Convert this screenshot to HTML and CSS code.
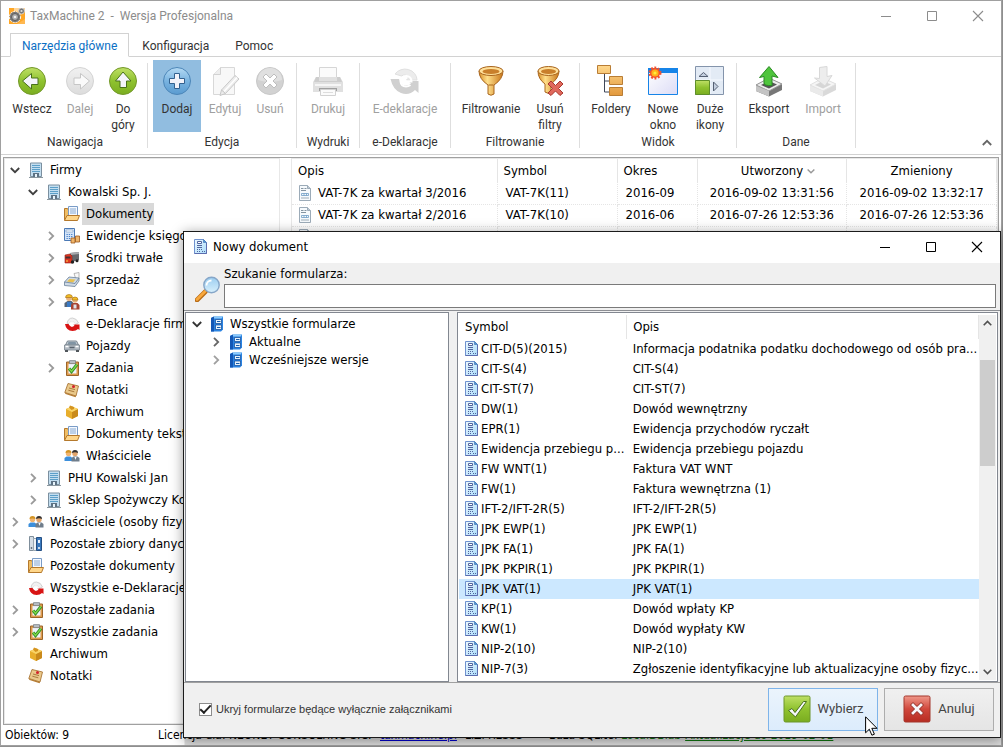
FILE: index.html
```html
<!DOCTYPE html>
<html lang="pl">
<head>
<meta charset="utf-8">
<title>TaxMachine 2 - Wersja Profesjonalna</title>
<link rel="stylesheet" href="styles.css">
</head>
<body>
<svg class="defs" aria-hidden="true">
  <defs>
    <linearGradient id="gGreen" x1="0" y1="0" x2="0" y2="1"><stop offset="0" stop-color="#bfe066"/><stop offset=".5" stop-color="#8fc22f"/><stop offset="1" stop-color="#7aad20"/></linearGradient>
    <linearGradient id="gBlue" x1="0" y1="0" x2="0" y2="1"><stop offset="0" stop-color="#b5daf4"/><stop offset=".5" stop-color="#79b3e0"/><stop offset="1" stop-color="#5a9bd0"/></linearGradient>
    <linearGradient id="gGray" x1="0" y1="0" x2="0" y2="1"><stop offset="0" stop-color="#f1f1f1"/><stop offset="1" stop-color="#dcdcdc"/></linearGradient>
    <linearGradient id="gGold" x1="0" y1="0" x2="1" y2="0"><stop offset="0" stop-color="#d88f2a"/><stop offset=".35" stop-color="#ffdf8a"/><stop offset="1" stop-color="#c8761a"/></linearGradient>
    <linearGradient id="gBox" x1="0" y1="0" x2="0" y2="1"><stop offset="0" stop-color="#ffd88d"/><stop offset="1" stop-color="#e2983b"/></linearGradient>
    <linearGradient id="gRed" x1="0" y1="0" x2="0" y2="1"><stop offset="0" stop-color="#f0988a"/><stop offset=".5" stop-color="#d0473c"/><stop offset="1" stop-color="#b72c22"/></linearGradient>
    <linearGradient id="gWin" x1="0" y1="0" x2="1" y2="1"><stop offset="0" stop-color="#ffffff"/><stop offset="1" stop-color="#dcdcf6"/></linearGradient>
    <linearGradient id="gLamp" x1="0" y1="0" x2="0" y2="1"><stop offset="0" stop-color="#9bcdf0"/><stop offset="1" stop-color="#d8f0fc"/></linearGradient>
    <linearGradient id="gPaper" x1="0" y1="0" x2="1" y2="1"><stop offset="0" stop-color="#eef8ff"/><stop offset="1" stop-color="#a9dcfa"/></linearGradient>
  </defs>
  <symbol id="chev" viewBox="0 0 10 10"><path d="M3 .8 7.2 5 3 9.2" fill="none" stroke="currentColor" stroke-width="1.8"/></symbol>
  <symbol id="chevDown" viewBox="0 0 10 10"><path d="M.8 3 5 7.2 9.2 3" fill="none" stroke="currentColor" stroke-width="1.8"/></symbol>
  <symbol id="min" viewBox="0 0 12 12"><path d="M1 6.500H11" stroke="currentColor" fill="none"/></symbol>
  <symbol id="max" viewBox="0 0 12 12"><path d="M1.500 1.500h9v9h-9z" stroke="currentColor" fill="none"/></symbol>
  <symbol id="close" viewBox="0 0 12 12"><path d="M1 1 11 11M11 1 1 11" stroke="currentColor" fill="none" stroke-width="1.100"/></symbol>

  <symbol id="app" viewBox="0 0 16 16"><path d="M0 0h16v16H0z" fill="#ffa726"/><path d="M5 0h11v3L5 3z" fill="#fff8"/><path d="M8 16l8-5v5z" fill="#fff3"/><circle cx="6" cy="9" r="5.600" fill="#777" stroke="#fff" stroke-width="1" stroke-dasharray="2 1"/><circle cx="6" cy="9" r="3.500" fill="#aaa" stroke="#5d5d5d"/><circle cx="6" cy="9" r="1.300" fill="#eee"/><circle cx="12.500" cy="3" r="3" fill="#777" stroke="#ddd" stroke-width=".8"/><circle cx="12.500" cy="3" r="1.100" fill="#ddd"/></symbol>

  <symbol id="back" viewBox="0 0 32 32"><circle cx="16" cy="16" r="13.500" fill="url(#gGreen)" stroke="#73982a"/><path d="M6.500 16 15.500 8.500v4.500H22v6.500h-6.500V24z" fill="#f4f4fa" stroke="#48711a"/></symbol>
  <symbol id="fwd" viewBox="0 0 32 32"><circle cx="16" cy="16" r="13.500" fill="url(#gGray)" stroke="#d4d4d4"/><path d="M25.500 16 16.500 8.500v4.500H10v6.500h6.500V24z" fill="#fafafa" stroke="#c6c6c6"/></symbol>
  <symbol id="up" viewBox="0 0 32 32"><circle cx="16" cy="16" r="13.500" fill="url(#gGreen)" stroke="#73982a"/><path d="M16 7 8.500 16H13v6.500h6.500V16H24z" fill="#f4f4fa" stroke="#48711a"/></symbol>
  <symbol id="add" viewBox="0 0 32 32"><circle cx="16" cy="16" r="13.500" fill="url(#gBlue)" stroke="#4c86b8"/><path d="M13.500 8.500h5v5h5v5h-5v5h-5v-5h-5v-5h5z" fill="#f2f3fa" stroke="#33618f"/></symbol>
  <symbol id="edit" viewBox="0 0 32 32"><path d="M4.500 9.500 11.500 2.500h14v27h-21z" fill="#f8f8f8" stroke="#d8d8d8"/><path d="M4.500 9.500h7v-7" fill="#eee" stroke="#d2d2d2"/><path d="M12.500 25 26 10.500l4 3.500L16.500 28.500l-5.500 2z" fill="#ececec" stroke="#c8c8c8"/><path d="M15 26.500 28 12.500" stroke="#fff" stroke-width="1.500"/><path d="M12.500 25l4 3.500" stroke="#c4c4c4"/></symbol>
  <symbol id="del" viewBox="0 0 32 32"><circle cx="16" cy="16" r="13.500" fill="#d2d2d2" stroke="#c8c8c8"/><path d="M4 15a12 12 0 0 1 24 0q-12 4-24 0z" fill="#e0e0e0"/><path d="M12 9 16 13 20 9 23 12 19 16 23 20 20 23 16 19 12 23 9 20 13 16 9 12z" fill="#fff" stroke="#bebebe"/></symbol>
  <symbol id="print" viewBox="0 0 32 32"><path d="M7.500 2.500h17v13h-17z" fill="#fbfbfb" stroke="#d6d6d6"/><path d="M4 12h24l3 5v10H1V17z" fill="#e0e0e0"/><path d="M4 12h3v4h18v-4h3l2 5H2z" fill="#cdcdcd"/><path d="M3 20h26" stroke="#f6f6f6" stroke-width="2"/><path d="M7 23h18v3H7z" fill="#a0a0a0"/><path d="M8.500 24.500h15v6h-15z" fill="#fbfbfb" stroke="#d2d2d2"/><path d="M11 27.500h10" stroke="#ddd"/></symbol>
  <symbol id="edek" viewBox="0 0 32 32"><path d="M6 9a12 11 0 0 1 22 6H17.500l2-2a4.500 4.500 0 0 0-7-2z" fill="#ececec" stroke="#e0e0e0"/><path d="M1.500 14h8.500q1.500 6 6.500 6.500 3.500 0 5.500-2l-3-2.500h10.500v12l-3.500-3A13 12 0 0 1 12 28Q4 25 1.500 14z" fill="#d0d0d0"/><path d="M11.500 16.500h11q0-5-5-5.500-5.500.5-6 5.500.5 5 5.500 5 2.500 0 4.500-1.500" fill="none" stroke="#fff" stroke-width="2"/></symbol>
  <symbol id="funnel" viewBox="0 0 32 32"><path d="M4 6q0 8 9 14v9q3 2.500 6 0v-9q9-6 9-14z" fill="url(#gGold)" stroke="#a8641d"/><ellipse cx="16" cy="6" rx="12" ry="4.500" fill="#ffe09a" stroke="#a8641d"/><ellipse cx="16" cy="6.500" rx="8.500" ry="2.500" fill="#c97f2b"/><path d="M13.500 20h5" stroke="#a8641d"/></symbol>
  <symbol id="funnelX" viewBox="0 0 32 32"><path d="M4 6q0 8 7 13v8q3 2.500 6 0v-8q8-6 8-13z" fill="url(#gGold)" stroke="#a8641d"/><ellipse cx="14.500" cy="6" rx="10.500" ry="4.500" fill="#ffe09a" stroke="#a8641d"/><ellipse cx="14.500" cy="6.500" rx="7.500" ry="2.500" fill="#c97f2b"/><path d="M17 16 21.500 20.500 26 16 29 19 24.500 23.500 29 28 26 30.500 21.500 26 17 30.500 14 28 18.500 23.500 14 19z" fill="#e0685c" stroke="#a9372d"/></symbol>
  <symbol id="foldery" viewBox="0 0 32 32"><path d="M9.500 9v18H17M9.500 16H17" fill="none" stroke="#3d4658"/><path d="M2.500 .5h13v8h-13zM14.500 11.500h13v8h-13zM14.500 22.500h13v8h-13z" fill="url(#gBox)" stroke="#b97d35"/></symbol>
  <symbol id="nowe" viewBox="0 0 32 32"><path d="M1.500 3.500h29v26h-29z" fill="url(#gWin)" stroke="#1684e8"/><path d="M1 3h30v5H1z" fill="#1684e8"/><circle cx="8" cy="8" r="5" fill="#f4512c" stroke="#f4512c" stroke-width="3" stroke-dasharray="1.700 1.500"/><circle cx="8" cy="8" r="2.600" fill="#ffec3d" stroke="#ffb31a" stroke-width="2"/></symbol>
  <symbol id="duze" viewBox="0 0 32 32"><path d="M1.500 1.500h28v28h-28z" fill="#e3ebf5" stroke="#8494ab"/><path d="M16 2v27M2 15h27" stroke="#f7faff"/><path d="M1.500 15.500h14v14h-14z" fill="url(#gGreen)" stroke="#5f8f2a"/><path d="M5 11.500 9.500 7.500 14 11.500z" fill="#c4cfdf" stroke="#566174"/><path d="M19.500 17 24 21.500 19.500 26z" fill="#c4cfdf" stroke="#566174"/></symbol>
  <symbol id="eksport" viewBox="0 0 32 32"><path d="M3 20 16 13l13 6v6L16 31.500 3 26z" fill="#777"/><path d="M3 20 16 13l13 6-13 7z" fill="#ececec" stroke="#999"/><path d="M8 20 16 16l8 3.500-8 4z" fill="#555"/><path d="M3 20.500 16 26v5.500L3 26z" fill="#c4c4c4"/><path d="M16 1.500 6.500 12.500l4.500-1v6.500q0 3 8 2.500v-9.500l6 1.500z" fill="#4fc53c" stroke="#2a8a24"/></symbol>
  <symbol id="import" viewBox="0 0 32 32"><path d="M3 20 16 13l13 6v6L16 31.500 3 26z" fill="#d9d9d9"/><path d="M3 20 16 13l13 6-13 7z" fill="#f5f5f5" stroke="#e2e2e2"/><path d="M8 20 16 16l8 3.500-8 4z" fill="#d6d6d6"/><path d="M3 20.500 16 26v5.500L3 26z" fill="#eaeaea"/><path d="M12.500 2.500 20 1.500v10l5-1-7 10.500-10.500-8 5 .5z" fill="#ededed" stroke="#d8d8d8"/></symbol>

  <symbol id="firm" viewBox="0 0 16 16"><path d="M2.500 1h11v13.500h-11z" fill="#c3def0" stroke="#7b8f9f"/><path d="M4 3.500h8M4 5.500h8M4 7.500h8M4 9.500h8" stroke="#5c9fc8"/><path d="M5 11h6v4H5z" fill="#5d7284"/><path d="M7 12h2v3H7z" fill="#e8f4fb"/><path d="M1 15.500h14" stroke="#8a979f"/></symbol>
  <symbol id="folder" viewBox="0 0 16 16"><path d="M.5 14V2.500h3l1 1.500H12v10z" fill="#f0be65" stroke="#b5792c"/><path d="M4.500 .5h9v10h-9z" fill="#f5f9ff" stroke="#7a9cc7"/><path d="M6 3h6M6 5h6M6 7h6" stroke="#86a8d0"/><path d="M.5 14.500 3 9.500h12.500l-2 5z" fill="#ffd68a" stroke="#b5792c"/></symbol>
  <symbol id="calc" viewBox="0 0 16 16"><path d="M.5.5h10v12H.5z" fill="#d4e4f8" stroke="#4b79b5"/><path d="M2 2h7v2H2z" fill="#fff" stroke="#6b93c4" stroke-width=".6"/><path d="M2.500 6.500h6M2.500 8.500h6M2.500 10.500h6" stroke="#4a82c8" stroke-dasharray="1.300 1"/><path d="M7 10h4v5H7zM11.500 8h4v6h-4z" fill="#eeb56a" stroke="#9c581c" stroke-width=".8"/></symbol>
  <symbol id="truck" viewBox="0 0 16 16"><path d="M6 3l9-1v8l-8 2z" fill="#68696d"/><path d="M6 3l9-1v2L7 5z" fill="#a9aaad"/><path d="M1 5l5-1 2 2v7H1z" fill="#df3520" stroke="#8d2218" stroke-width=".6"/><path d="M1.500 6.500h5v2h-5z" fill="#473032"/><circle cx="8.500" cy="12" r="1.700" fill="#222"/><circle cx="13" cy="10.800" r="1.500" fill="#222"/><path d="M2 11h2" stroke="#ffd84b"/></symbol>
  <symbol id="cash" viewBox="0 0 16 16"><path d="M10 1.500 15 .5v6l-3 1z" fill="#f9f9f9" stroke="#999" stroke-width=".7"/><path d="M.5 10 5 5l10 1v3l-4 5.500-10.500-1z" fill="#cfdae6" stroke="#6a8098" stroke-width=".8"/><path d="M3 9.500 5.500 7l6 .6-2.500 3z" fill="#e9c14f"/><path d="M.5 10 11 11.500 15 6" fill="none" stroke="#6a8098" stroke-width=".8"/></symbol>
  <symbol id="workers" viewBox="0 0 16 16"><circle cx="5" cy="4" r="3" fill="#e8b37c"/><path d="M1.500 3.500a3.500 3 0 0 1 7 0z" fill="#f4bd25" stroke="#a06b12" stroke-width=".6"/><path d="M.5 13V9l3-2h4l2 2v4z" fill="#546579"/><path d="M3 8h4v5H3z" fill="#3b7ac4"/><circle cx="11" cy="6" r="2.700" fill="#e8b37c"/><path d="M8 6a3 3 0 0 1 6 0z" fill="#f4bd25" stroke="#a06b12" stroke-width=".6"/><path d="M7 15.500V11l2-2h4.500l2 2v4.500z" fill="#a94433"/><path d="M9.500 10.500h3v4h-3z" fill="#dbe2eb"/></symbol>
  <symbol id="pl" viewBox="0 0 16 16"><path d="M3 7.500Q4 2 8.500 2q4.500.5 6 5L11 8.500Q10 5.500 8 5.500T5 8z" fill="#f1f1f1" stroke="#c2c2c2" stroke-width=".7"/><path d="M1 8h3.500q1.500 2.500 4 2.500 1.500 0 2-1L9 8.500h6.500V14L14 13q-2 2-5.500 2Q2 14.500 1 8z" fill="#d81414"/><path d="M5.500 8h5q-.5-2-2.500-2.300Q5.500 6 5.500 8q.5 2.500 3 2.500" fill="none" stroke="#fff" stroke-width="1"/></symbol>
  <symbol id="car" viewBox="0 0 16 16"><path d="M3.500 3h9l2 4H1.500z" fill="#c3ccd4" stroke="#7a858f"/><path d="M4.500 4h7l1 2.500h-9z" fill="#8094a4"/><path d="M.5 7h15v5H.5z" fill="#b4bcc4" stroke="#7a858f" stroke-width=".8"/><path d="M1.500 8.500h3M11.500 8.500h3" stroke="#fff" stroke-width="1.500"/><path d="M5.500 9.500h5" stroke="#59636d" stroke-width="1.500"/><path d="M1 12h3v2H1zM12 12h3v2h-3z" fill="#50565b"/></symbol>
  <symbol id="task" viewBox="0 0 16 16"><path d="M2.500 2h12v13.500h-12z" fill="#df9c4d" stroke="#9b642b"/><path d="M4.500 4h8v9.500h-8z" fill="#eef3fc"/><path d="M5.500 .6h6v3h-6z" fill="#b9bec4" stroke="#717980" stroke-width=".7"/><path d="M5 8.500 7.500 11.500 13 4.500" fill="none" stroke="#2f8a22" stroke-width="3"/><path d="M5 8.500 7.500 11.500 13 4.500" fill="none" stroke="#7cd64a" stroke-width="1.400"/></symbol>
  <symbol id="note" viewBox="0 0 16 16"><path d="M4 1.500 14.500 4 12 14 .8 10.500z" fill="#eac98b" stroke="#a97535" stroke-width=".9"/><path d="M.8 10.500 12 14l-.4 1.200L1.500 12z" fill="#b57c33"/><path d="M5 6l6 1.600M4.300 8.200l6 1.600" stroke="#ab7c3f"/><circle cx="9.500" cy="4.500" r="1.500" fill="#d3222a"/></symbol>
  <symbol id="box" viewBox="0 0 16 16"><path d="M2 5 8 2.500 14 5v7L8 15 2 12z" fill="#e8ae2c"/><path d="M8 8l6-3v7l-6 3z" fill="#c98a1b"/><path d="M2 5l6-2.500L14 5 8 8z" fill="#f9d467"/><path d="M5 3.500 6 1.500l4 1.500v2L7.500 6z" fill="#d59420"/></symbol>
  <symbol id="owners" viewBox="0 0 16 16"><circle cx="4.500" cy="5.500" r="2.700" fill="#f1b46f"/><path d="M1.500 5a3 3 0 0 1 6 0q-3-1-6 0z" fill="#d39425"/><path d="M.5 13V10l2-1.500h4L8.500 10v3z" fill="#3c8fdc"/><circle cx="11" cy="5.500" r="2.700" fill="#e3a56b"/><path d="M8 5a3 3 0 0 1 6 0q-3-1.500-6 0z" fill="#33302f"/><path d="M7.500 13.500V10l2-1.500h4l2 1.500v3.500z" fill="#6f7d8b"/><path d="M10.500 9h2l-1 3z" fill="#fff"/></symbol>
  <symbol id="binders" viewBox="0 0 16 16"><path d="M1.500.5h4v14h-4z" fill="#d5dee6" stroke="#7f8e9b"/><path d="M5.500 2.500h3v12h-3z" fill="#eef3f7" stroke="#9aa7b2"/><path d="M8.500 1.500h5v13h-5z" fill="#3978bc" stroke="#244f83"/><path d="M10 4h2v3h-2z" fill="#e7f1fb"/><circle cx="11" cy="12" r="1" fill="#fff"/><circle cx="3.500" cy="12" r=".9" fill="#5b6a78"/></symbol>
  <symbol id="decl" viewBox="0 0 16 16"><path d="M2.500.5h8l3 3v12h-11z" fill="#f6fafd" stroke="#9cabb8"/><path d="M10.500.5v3h3" fill="#bfcbd5" stroke="#9cabb8"/><path d="M4 3.500h2.500M7.500 3.500h2M4 5.500h5" stroke="#8494a1"/><path d="M4.500 8.500h7v2h-7zM7 8.500v2M9.500 8.500v2" fill="none" stroke="#6d9cc4" stroke-width=".8"/><path d="M4 13h8" stroke="#9dacb8"/></symbol>
  <symbol id="form" viewBox="0 0 14 16"><path d="M.5.500h9l3 3v11H.5z" fill="url(#gPaper)" stroke="#6f92cf"/><path d="M12.500 4v10.500H.5" fill="none" stroke="#5c6cae"/><path d="M9.500.5v3h3z" fill="#4f97da" stroke="#4777b5" stroke-width=".7"/><path d="M3.500 2.500h4v2h-4z" fill="#fff" stroke="#52649e"/><path d="M3 6.500h5M3 8.500h5" stroke="#52649e"/><path d="M3 10.500h5M3 12.500h3M8 12.500h3" stroke="#52649e" stroke-dasharray="1 1"/></symbol>
  <symbol id="cabinet" viewBox="0 0 14 16"><path d="M1 2 4 .5h9v13L11 15.500H1z" fill="#2a83e2"/><path d="M1 2 4 .5v15H1z" fill="#1357b5"/><path d="M4 .5h9L11.500 2.500H4z" fill="#8ccbfc"/><path d="M5.500 3.500h6v4h-6zM5.500 9h6v4.500h-6z" fill="#e6f2fc" stroke="#0c4897" stroke-width=".7"/><path d="M7 5.500h3.500M7 11.500h3.500" stroke="#155cae" stroke-width="1.200"/></symbol>
  <symbol id="lens" viewBox="0 0 26 26"><path d="M2 24 10.500 15.500" stroke="#b86c17" stroke-width="4.600" stroke-linecap="round"/><path d="M2 23.500 10 15.500" stroke="#f8a83d" stroke-width="2.800" stroke-linecap="round"/><circle cx="16.500" cy="9" r="7.700" fill="url(#gLamp)" stroke="#86a6c8" stroke-width="1.400"/><path d="M11.500 9.500a5 5 0 0 1 5-5" fill="none" stroke="#fff" stroke-width="1.800"/></symbol>
  <symbol id="ok" viewBox="0 0 28 28"><rect x="1" y="1" width="26" height="26" rx="1.500" fill="url(#gGreen)" stroke="#6d962b"/><path d="M5.500 15.500 9 13.500 12 17.500 20.500 6.500h3L12.500 22z" fill="#f5f7fc" stroke="#48711a"/></symbol>
  <symbol id="cancel" viewBox="0 0 28 28"><rect x="1" y="1" width="26" height="26" rx="1.500" fill="url(#gRed)" stroke="#a4372d"/><path d="M10 7.500 14 11.500 18 7.500 20.500 10 16.500 14 20.500 18 18 20.500 14 16.500 10 20.500 7.500 18 11.500 14 7.500 10z" fill="#f7f7fb" stroke="#8d2219"/></symbol>
</svg>

<div class="window">
  <header class="titlebar">
    <svg class="i16"><use href="#app"/></svg>
    <h1>TaxMachine 2&nbsp; -&nbsp; Wersja Profesjonalna</h1>
    <div class="winbtns">
      <button aria-label="Minimalizuj"><svg class="i12"><use href="#min"/></svg></button>
      <button aria-label="Maksymalizuj"><svg class="i12"><use href="#max"/></svg></button>
      <button aria-label="Zamknij"><svg class="i12"><use href="#close"/></svg></button>
    </div>
  </header>

  <nav class="tabs">
    <button class="tab active">Narzędzia główne</button>
    <button class="tab">Konfiguracja</button>
    <button class="tab">Pomoc</button>
  </nav>

  <div class="ribbon">
    <section class="group">
      <div class="tools">
        <button class="tool"><svg class="i32"><use href="#back"/></svg>Wstecz</button>
        <button class="tool" disabled><svg class="i32"><use href="#fwd"/></svg>Dalej</button>
        <button class="tool tight"><svg class="i32"><use href="#up"/></svg>Do góry</button>
      </div>
      <h2>Nawigacja</h2>
    </section>
    <section class="group">
      <div class="tools">
        <button class="tool current"><svg class="i32"><use href="#add"/></svg>Dodaj</button>
        <button class="tool" disabled><svg class="i32"><use href="#edit"/></svg>Edytuj</button>
        <button class="tool narrow" disabled><svg class="i32"><use href="#del"/></svg>Usuń</button>
      </div>
      <h2>Edycja</h2>
    </section>
    <section class="group">
      <div class="tools">
        <button class="tool snug" disabled><svg class="i32"><use href="#print"/></svg>Drukuj</button>
      </div>
      <h2>Wydruki</h2>
    </section>
    <section class="group">
      <div class="tools">
        <button class="tool wide" disabled><svg class="i32"><use href="#edek"/></svg>E-deklaracje</button>
      </div>
      <h2>e-Deklaracje</h2>
    </section>
    <section class="group">
      <div class="tools">
        <button class="tool mid"><svg class="i32"><use href="#funnel"/></svg>Filtrowanie</button>
        <button class="tool"><svg class="i32"><use href="#funnelX"/></svg>Usuń filtry</button>
      </div>
      <h2>Filtrowanie</h2>
    </section>
    <section class="group">
      <div class="tools">
        <button class="tool snug"><svg class="i32"><use href="#foldery"/></svg>Foldery</button>
        <button class="tool snug"><svg class="i32"><use href="#nowe"/></svg>Nowe okno</button>
        <button class="tool narrow"><svg class="i32"><use href="#duze"/></svg>Duże ikony</button>
      </div>
      <h2>Widok</h2>
    </section>
    <section class="group">
      <div class="tools">
        <button class="tool roomy"><svg class="i32"><use href="#eksport"/></svg>Eksport</button>
        <button class="tool roomy" disabled><svg class="i32"><use href="#import"/></svg>Import</button>
      </div>
      <h2>Dane</h2>
    </section>
    <button class="collapse" aria-label="Zwiń wstążkę"><svg class="i10 flip"><use href="#chevDown"/></svg></button>
  </div>

  <main class="workspace">
    <ul class="tree">
      <li class="open"><svg class="i10"><use href="#chevDown"/></svg><svg class="i16"><use href="#firm"/></svg><span>Firmy</span></li>
      <li class="l2 open"><svg class="i10"><use href="#chevDown"/></svg><svg class="i16"><use href="#firm"/></svg><span>Kowalski Sp. J.</span></li>
      <li class="l3 leaf"><svg class="i16"><use href="#folder"/></svg><span class="selected">Dokumenty</span></li>
      <li class="l3"><svg class="i10"><use href="#chev"/></svg><svg class="i16"><use href="#calc"/></svg><span>Ewidencje księgowe</span></li>
      <li class="l3"><svg class="i10"><use href="#chev"/></svg><svg class="i16"><use href="#truck"/></svg><span>Środki trwałe</span></li>
      <li class="l3"><svg class="i10"><use href="#chev"/></svg><svg class="i16"><use href="#cash"/></svg><span>Sprzedaż</span></li>
      <li class="l3"><svg class="i10"><use href="#chev"/></svg><svg class="i16"><use href="#workers"/></svg><span>Płace</span></li>
      <li class="l3 leaf"><svg class="i16"><use href="#pl"/></svg><span>e-Deklaracje firmy</span></li>
      <li class="l3 leaf"><svg class="i16"><use href="#car"/></svg><span>Pojazdy</span></li>
      <li class="l3"><svg class="i10"><use href="#chev"/></svg><svg class="i16"><use href="#task"/></svg><span>Zadania</span></li>
      <li class="l3 leaf"><svg class="i16"><use href="#note"/></svg><span>Notatki</span></li>
      <li class="l3 leaf"><svg class="i16"><use href="#box"/></svg><span>Archiwum</span></li>
      <li class="l3 leaf"><svg class="i16"><use href="#folder"/></svg><span>Dokumenty tekstowe</span></li>
      <li class="l3 leaf"><svg class="i16"><use href="#owners"/></svg><span>Właściciele</span></li>
      <li class="l2"><svg class="i10"><use href="#chev"/></svg><svg class="i16"><use href="#firm"/></svg><span>PHU Kowalski Jan</span></li>
      <li class="l2"><svg class="i10"><use href="#chev"/></svg><svg class="i16"><use href="#firm"/></svg><span>Sklep Spożywczy Kowalski</span></li>
      <li><svg class="i10"><use href="#chev"/></svg><svg class="i16"><use href="#owners"/></svg><span>Właściciele (osoby fizyczne)</span></li>
      <li><svg class="i10"><use href="#chev"/></svg><svg class="i16"><use href="#binders"/></svg><span>Pozostałe zbiory danych</span></li>
      <li class="leaf"><svg class="i16"><use href="#folder"/></svg><span>Pozostałe dokumenty</span></li>
      <li class="leaf"><svg class="i16"><use href="#pl"/></svg><span>Wszystkie e-Deklaracje</span></li>
      <li><svg class="i10"><use href="#chev"/></svg><svg class="i16"><use href="#task"/></svg><span>Pozostałe zadania</span></li>
      <li><svg class="i10"><use href="#chev"/></svg><svg class="i16"><use href="#task"/></svg><span>Wszystkie zadania</span></li>
      <li class="leaf"><svg class="i16"><use href="#box"/></svg><span>Archiwum</span></li>
      <li class="leaf"><svg class="i16"><use href="#note"/></svg><span>Notatki</span></li>
    </ul>
    <div class="list">
      <table class="docs">
        <colgroup><col class="c-name"><col class="c-sym"><col class="c-per"><col class="c-date"><col class="c-date"></colgroup>
        <thead><tr><th>Opis</th><th>Symbol</th><th>Okres</th><th class="mid sorted">Utworzony <svg class="thin"><use href="#chevDown"/></svg></th><th class="mid">Zmieniony</th></tr></thead>
        <tbody>
          <tr><td><div class="cell"><svg class="i16"><use href="#decl"/></svg>VAT-7K za kwartał 3/2016</div></td><td>VAT-7K(11)</td><td>2016-09</td><td class="mid">2016-09-02 13:31:56</td><td class="mid">2016-09-02 13:32:17</td></tr>
          <tr><td><div class="cell"><svg class="i16"><use href="#decl"/></svg>VAT-7K za kwartał 2/2016</div></td><td>VAT-7K(10)</td><td>2016-06</td><td class="mid">2016-07-26 12:53:36</td><td class="mid">2016-07-26 12:53:36</td></tr>
          <tr><td><div class="cell"><svg class="i16"><use href="#decl"/></svg></div></td><td></td><td></td><td></td><td></td></tr>
        </tbody>
      </table>
    </div>
  </main>

  <footer class="status">
    <span class="count">Obiektów: 9</span>
    <span class="licence">Licencja dla: NEONET CONSULTING S.C.</span>
    <a href="#www">taxmachine.pl</a>
    <span class="key">LIZPRESSS</span>
    <span>Baza SQLite: <b>LocalDBlab</b></span>
    <a class="green" href="#update">Aktualizacje do 2019-02-01</a>
  </footer>
</div>

<div class="dialog" role="dialog" aria-labelledby="dlg">
  <header class="dlg-title">
    <svg class="form"><use href="#form"/></svg>
    <h2 id="dlg">Nowy dokument</h2>
    <div class="winbtns">
      <button aria-label="Minimalizuj"><svg class="i12"><use href="#min"/></svg></button>
      <button aria-label="Maksymalizuj"><svg class="i12"><use href="#max"/></svg></button>
      <button aria-label="Zamknij"><svg class="i12"><use href="#close"/></svg></button>
    </div>
  </header>
  <div class="search">
    <svg class="lens"><use href="#lens"/></svg>
    <div class="field">
      <label for="q">Szukanie formularza:</label>
      <input id="q" type="text">
    </div>
  </div>
  <div class="panes">
    <ul class="forms">
      <li class="open"><svg class="i10"><use href="#chevDown"/></svg><svg class="form"><use href="#cabinet"/></svg>Wszystkie formularze</li>
      <li class="l2 hot"><svg class="i10"><use href="#chev"/></svg><svg class="form"><use href="#cabinet"/></svg>Aktualne</li>
      <li class="l2"><svg class="i10"><use href="#chev"/></svg><svg class="form"><use href="#cabinet"/></svg>Wcześniejsze wersje</li>
    </ul>
    <div class="picker">
      <table>
        <colgroup><col class="p-sym"><col></colgroup>
        <thead><tr><th>Symbol</th><th>Opis</th></tr></thead>
        <tbody>
          <tr><td><div class="cell"><svg class="form"><use href="#form"/></svg>CIT-D(5)(2015)</div></td><td>Informacja podatnika podatku dochodowego od osób pra...</td></tr>
          <tr><td><div class="cell"><svg class="form"><use href="#form"/></svg>CIT-S(4)</div></td><td>CIT-S(4)</td></tr>
          <tr><td><div class="cell"><svg class="form"><use href="#form"/></svg>CIT-ST(7)</div></td><td>CIT-ST(7)</td></tr>
          <tr><td><div class="cell"><svg class="form"><use href="#form"/></svg>DW(1)</div></td><td>Dowód wewnętrzny</td></tr>
          <tr><td><div class="cell"><svg class="form"><use href="#form"/></svg>EPR(1)</div></td><td>Ewidencja przychodów ryczałt</td></tr>
          <tr><td><div class="cell"><svg class="form"><use href="#form"/></svg>Ewidencja przebiegu p...</div></td><td>Ewidencja przebiegu pojazdu</td></tr>
          <tr><td><div class="cell"><svg class="form"><use href="#form"/></svg>FW WNT(1)</div></td><td>Faktura VAT WNT</td></tr>
          <tr><td><div class="cell"><svg class="form"><use href="#form"/></svg>FW(1)</div></td><td>Faktura wewnętrzna (1)</td></tr>
          <tr><td><div class="cell"><svg class="form"><use href="#form"/></svg>IFT-2/IFT-2R(5)</div></td><td>IFT-2/IFT-2R(5)</td></tr>
          <tr><td><div class="cell"><svg class="form"><use href="#form"/></svg>JPK EWP(1)</div></td><td>JPK EWP(1)</td></tr>
          <tr><td><div class="cell"><svg class="form"><use href="#form"/></svg>JPK FA(1)</div></td><td>JPK FA(1)</td></tr>
          <tr><td><div class="cell"><svg class="form"><use href="#form"/></svg>JPK PKPIR(1)</div></td><td>JPK PKPIR(1)</td></tr>
          <tr class="selected"><td><div class="cell"><svg class="form"><use href="#form"/></svg>JPK VAT(1)</div></td><td>JPK VAT(1)</td></tr>
          <tr><td><div class="cell"><svg class="form"><use href="#form"/></svg>KP(1)</div></td><td>Dowód wpłaty KP</td></tr>
          <tr><td><div class="cell"><svg class="form"><use href="#form"/></svg>KW(1)</div></td><td>Dowód wypłaty KW</td></tr>
          <tr><td><div class="cell"><svg class="form"><use href="#form"/></svg>NIP-2(10)</div></td><td>NIP-2(10)</td></tr>
          <tr><td><div class="cell"><svg class="form"><use href="#form"/></svg>NIP-7(3)</div></td><td>Zgłoszenie identyfikacyjne lub aktualizacyjne osoby fizyc...</td></tr>
        </tbody>
      </table>
      <div class="scroll">
        <svg class="flip"><use href="#chevDown"/></svg>
        <div class="track"><div class="thumb"></div></div>
        <svg><use href="#chevDown"/></svg>
      </div>
    </div>
  </div>
  <div class="actions">
    <input type="checkbox" id="hide" checked>
    <label for="hide">Ukryj formularze będące wyłącznie załącznikami</label>
    <button class="btn primary"><svg class="i28"><use href="#ok"/></svg>Wybierz</button>
    <button class="btn"><svg class="i28"><use href="#cancel"/></svg>Anuluj</button>
  </div>
</div>

<svg class="cursor" viewBox="0 0 13 20" aria-hidden="true"><path d="M.6.8v16l3.700-3.600 2.600 6 2.500-1-2.600-5.900H12z" fill="#fff" stroke="#000" stroke-width="1"/></svg>
</body>
</html>
```
FILE: styles.css
```css
* { box-sizing: border-box; }
body {
  margin: 0;
  height: 100vh;
  overflow: hidden;
  background: #8f8f8f;
  color: #000;
  font: 13px/18px "DejaVu Sans Condensed", "DejaVu Sans", sans-serif;
}
h1, h2, ul { margin: 0; padding: 0; font-weight: normal; font-size: inherit; list-style: none; }
button { margin: 0; padding: 0; border: 0; background: none; font: inherit; color: inherit; }
svg { flex: none; display: block; }
.defs { position: absolute; width: 0; height: 0; }
.i10 { width: 10px; height: 10px; }
.i12 { width: 12px; height: 12px; }
.i16 { width: 16px; height: 16px; }
.i28 { width: 28px; height: 28px; }
.i32 { width: 32px; height: 32px; }
.form { width: 14px; height: 16px; }
.flip { transform: scaleY(-1); }

/* Main window */
.window {
  height: calc(100vh - 1px);
  margin-right: 1px;
  display: flex;
  flex-direction: column;
  background: #fff;
  border: 1px solid #a0a0a0;
}
.titlebar {
  height: 30px;
  flex: none;
  display: flex;
  align-items: center;
  gap: 5px;
  padding-left: 8px;
  color: #8c8c8c;
  font: 12px/18px Roboto, sans-serif;
}
.winbtns { margin-left: auto; display: flex; }
.winbtns button { width: 46px; height: 30px; display: grid; place-items: center; }
.tabs {
  height: 26px;
  flex: none;
  display: flex;
  padding: 2px 0 0 9px;
  border-bottom: 1px solid #d2d2d2;
  font: 12px/16px Roboto, sans-serif;
}
.tab { height: 24px; padding: 2px 13px 0; color: #333; }
.tab.active {
  padding: 2px 11px 0;
  background: #fff;
  color: #0b6fc4;
  border: 1px solid #d2d2d2;
  border-bottom-color: #fff;
}
.ribbon {
  height: 98px;
  flex: none;
  display: flex;
  border-bottom: 1px solid #d2d2d2;
  font: 12px/16px Roboto, sans-serif;
  color: #333;
}
.group {
  display: flex;
  flex-direction: column;
  align-items: center;
  margin: 6px 0;
  padding: 0 5px;
  border-right: 1px solid #dedede;
}
.group:first-child { padding-left: 7px; }
.group h2 { margin-top: auto; line-height: 12px; }
.tools { display: flex; margin-top: -3px; }
.tool {
  width: 48px;
  height: 72px;
  display: flex;
  flex-direction: column;
  align-items: center;
  gap: 4px;
  padding-top: 5px;
}
.tool.tight { width: 38px; }
.tool.narrow { width: 42px; }
.tool.snug { width: 52px; }
.tool.roomy { width: 54px; }
.tool.mid { width: 70px; }
.tool.wide { width: 80px; }
.tool:disabled { color: #a0a0a0; }
.tool.current { background: #91bde0; }
.collapse { margin: auto 9px 6px auto; color: #666; }

/* Workspace */
.workspace {
  flex: 1;
  min-height: 0;
  display: flex;
  gap: 11px;
  margin: 2px 2px 0;
  border: 1px solid #a0a0a0;
  overflow: hidden;
}
.tree { width: 276px; flex: none; border: 1px solid #e8e8e8; }
.tree li {
  height: 22px;
  display: flex;
  align-items: center;
  gap: 8px;
  padding-left: 5px;
  color: #9a9a9a;
  white-space: nowrap;
}
.tree li.l2 { padding-left: 23px; }
.tree li.l3 { padding-left: 41px; }
.tree li.leaf { padding-left: 23px; }
.tree li.l3.leaf { padding-left: 59px; }
.tree span { color: #000; margin-left: -3px; line-height: 22px; padding: 0 1px; }
.tree span.selected { margin-left: -6px; padding: 0 1px 0 4px; background: #d9d9d9; }
.tree li.open { color: #404040; }
.list { flex: 1; min-width: 0; border: 1px solid #e8e8e8; }
table { width: 100%; border-collapse: collapse; table-layout: fixed; }
th, td { padding: 0; text-align: left; font-weight: normal; white-space: nowrap; }
.cell { display: flex; align-items: center; }
.c-name { width: 205px; }
.c-sym { width: 120px; }
.c-per { width: 80px; }
.docs th { height: 23px; padding-left: 6px; border-right: 1px solid #e5e5e5; }
.docs td { height: 22px; padding-left: 8px; border: 1px dotted #e5e5e5; border-width: 0 1px 1px 0; }
.docs td:first-child { padding-left: 5px; }
.docs .cell { gap: 5px; }
.docs .mid { text-align: center; padding-left: 0; }
.docs .sorted { padding-left: 12px; }
.thin { display: inline-block; width: 8px; height: 8px; color: #999; }

.status {
  height: 20px;
  flex: none;
  display: flex;
  padding: 1px 5px 0 4px;
  font: 12px/18px "DejaVu Sans Condensed", "DejaVu Sans", sans-serif;
  white-space: nowrap;
  background: linear-gradient(90deg, #fff 183px, #dcdcdc 184px);
}
.count { width: 153px; }
.licence { width: 222px; }
.status .key { width: 92px; padding-left: 8px; }
.status b { font-weight: normal; color: #117711; }
.status a { color: #00c; }
.status a.green { color: #117711; margin-left: 4px; }

/* Dialog */
.dialog {
  position: absolute;
  left: 183px;
  top: 231px;
  right: 2px;
  bottom: 9px;
  display: flex;
  flex-direction: column;
  background: #f0f0f0;
  border: 1px solid #1b1b1b;
  box-shadow: 0 2px 12px rgba(0, 0, 0, .4);
}
.dlg-title {
  height: 31px;
  flex: none;
  display: flex;
  align-items: center;
  gap: 5px;
  padding: 0 0 2px 10px;
  background: #fff;
}
.search {
  height: 48px;
  flex: none;
  display: flex;
  align-items: center;
  gap: 3px;
  padding: 0 4px 0 11px;
  border-bottom: 1px solid #8d8f94;
}
.lens { width: 26px; height: 26px; margin-top: 4px; }
.field { flex: 1; display: flex; flex-direction: column; }
.field label { line-height: 18px; padding-bottom: 1px; }
.field input {
  height: 24px;
  border: 1px solid #7a7a7a;
  background: #fff;
  padding: 0 4px;
  font: inherit;
}
.panes { flex: 1; min-height: 0; display: flex; gap: 8px; padding: 1px 2px 0 1px; }
.forms, .picker { background: #fff; border: 1px solid #828790; }
.forms { width: 264px; flex: none; padding-top: 2px; }
.forms li { height: 18px; display: flex; align-items: center; gap: 6px; padding-left: 6px; }
.forms li .i10 { margin-right: -2px; color: #a0a0a0; }
.forms li .form { margin-left: 4px; }
.forms li.l2 { padding-left: 25px; }
.forms li.open .i10 { color: #333; }
.forms li.hot .i10 { color: #666; }
.picker { flex: 1; min-width: 0; display: flex; padding: 2px 1px 1px; }
.picker table { flex: 1; min-width: 0; width: auto; height: min-content; }
.p-sym { width: 170px; }
.picker th { height: 24px; padding-left: 6px; border-right: 1px solid #e5e5e5; }
.picker td { height: 20px; padding-left: 6px; }
.picker .cell { gap: 2px; }
.picker td:first-child { padding-left: 6px; }
.picker tr.selected { background: #cce8ff; }
.scroll {
  width: 17px;
  flex: none;
  display: flex;
  flex-direction: column;
  align-items: center;
  gap: 4px;
  padding: 4px 0;
  background: #f0f0f0;
  color: #505050;
}
.scroll svg { width: 9px; height: 9px; }
.track { flex: 1; width: 15px; padding-top: 28px; }
.thumb { height: 106px; background: #cdcdcd; }
.actions {
  height: 55px;
  flex: none;
  display: flex;
  align-items: center;
  gap: 6px;
  padding: 0 6px 2px 15px;
  border-top: 1px solid #a0a0a0;
  color: #333;
}
.actions label { margin-right: auto; margin-left: -2px; font: 11px/14px "Liberation Sans", sans-serif; }
.actions input {
  appearance: none;
  margin: 0;
  width: 13px;
  height: 13px;
  border: 1px solid #8c8c8c;
  background: #fff;
  display: grid;
  place-items: center;
}
.actions input:checked::after {
  content: "";
  width: 9px;
  height: 4px;
  margin-top: -3px;
  border: solid #222;
  border-width: 0 0 2px 2px;
  transform: rotate(-47deg);
}
.btn {
  width: 110px;
  height: 43px;
  display: flex;
  align-items: center;
  justify-content: center;
  gap: 7px;
  border: 1px solid #adadad;
  background: linear-gradient(#f0f0f0, #e5e5e5);
  font: 13px/18px Roboto, sans-serif;
  color: #444;
}
.btn.primary { border-color: #7eb4ea; background: linear-gradient(#ebf4fc, #dcecfc); }
.cursor { position: absolute; left: 865px; top: 716px; width: 13px; height: 20px; }
```
